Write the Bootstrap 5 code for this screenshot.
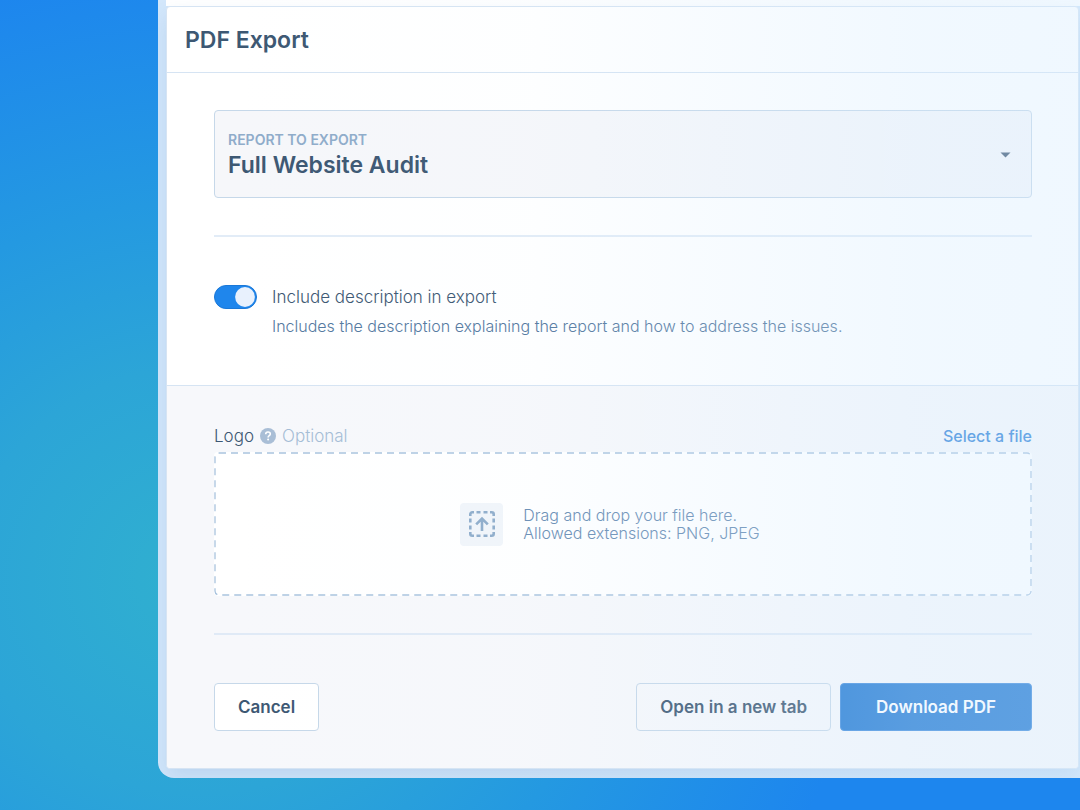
<!DOCTYPE html>
<html lang="en">
<head>
<meta charset="utf-8">
<meta name="viewport" content="width=device-width, initial-scale=1">
<title>PDF Export</title>
<link href="https://cdn.jsdelivr.net/npm/bootstrap@5.3.0/dist/css/bootstrap.min.css" rel="stylesheet">
<style>
  :root { --ink: #3d5873; --soft: #8facca; --line: #d6e4f3; --edge: #c6d8e9; }
  body {
    font-family: Inter, "Liberation Sans", sans-serif;
    color: var(--ink);
    font-size: 17px;
    line-height: 24px;
    font-weight: 300;
    background: radial-gradient(660px 610px at 200px 580px, #30b0cf 0, #2ca5d7 35%, #2499e1 62%, #1d86ee 100%) #1d86ee;
  }
  .stage { padding: 0 0 32px 158px; }
  .frame {
    background: #d3e7fb;
    padding: 0 1px 9px 8px;
    border-bottom-left-radius: 16px;
    position: relative;
    overflow: hidden;
  }
  .prev-strip { height: 6px; background: #fff; margin-right: -1px; }
  .panel {
    background: #fff;
    border: 1px solid var(--line);
    border-radius: 4px;
    box-shadow: 0 10px 20px rgba(60, 110, 180, .14);
  }
  /* pale wash that deepens towards the right side of the window */
  .frame::after {
    content: "";
    position: absolute;
    inset: 0;
    pointer-events: none;
    background: linear-gradient(90deg, rgba(212, 235, 255, 0) 8%, rgba(212, 235, 255, .04) 40%, rgba(212, 235, 255, .32) 82%, rgba(212, 235, 255, .36) 100%);
  }
  .panel-head { height: 66px; padding: 0 18px; border-bottom: 1px solid var(--line); }
  .panel-head h1 { font-size: 23px; line-height: 28px; font-weight: 600; }
  .part { padding: 37px 46px 37px 47px; }
  .part-lower { background: #f7f8fb; border-top: 1px solid var(--line); border-radius: 0 0 4px 4px; padding-top: 38px; }
  .rule { border: 0; border-top: 2px solid var(--line); margin: 37px 0 48px; opacity: .7; }
  .picker label { position: absolute; top: 20px; left: 14px; font-size: 14px; line-height: 20px; font-weight: 600; color: var(--soft); pointer-events: none; }
  .picker select {
    appearance: none;
    display: block;
    height: 88px;
    padding: 22px 48px 0 13px;
    border: 1px solid var(--edge);
    border-radius: 4px;
    background: #f6f7fa;
    color: var(--ink);
    font-size: 23px;
    font-weight: 600;
  }
  .picker svg { position: absolute; top: 42px; right: 21px; pointer-events: none; }
  .form-check.toggle { padding: 0; margin: 0; min-height: 0; gap: 15px; }
  .form-switch .form-check-input.knob {
    width: 43px; height: 24px; margin: 0; float: none; flex: none;
    background-color: #1f86ec; border: 1px solid #1a78d8;
    background-image: url("data:image/svg+xml,%3csvg xmlns='http://www.w3.org/2000/svg' viewBox='-4 -4 8 8'%3e%3ccircle r='3.6' fill='%23e8f1fd'/%3e%3c/svg%3e");
  }
  .note { color: #54799f; font-size: 16px; margin: 5px 0 10px 58px; }
  .logo-row { padding-bottom: 4px; gap: 6px; }
  .opt { color: #a5bdd6; }
  .pick-file { color: #2f83d8; font-weight: 500; font-size: 16px; text-decoration: none; }
  .drop { background: #fff; height: 144px; border-radius: 4px; gap: 20px; padding-right: 26px; font-size: 16px; line-height: 18px; color: #6a8eb5; }
  .drop .outline { position: absolute; inset: 1px; width: calc(100% - 2px); height: calc(100% - 2px); overflow: visible; }
  .drop-icon { width: 43px; height: 43px; border-radius: 4px; background: #f1f5fa; }
  .act { --bs-btn-padding-y: 11px; --bs-btn-padding-x: 23px; --bs-btn-border-radius: 4px; --bs-btn-font-size: 17px; --bs-btn-line-height: 24px; --bs-btn-font-weight: 600;
         height: 48px; --bs-btn-border-color: var(--edge); --bs-btn-color: var(--ink); --bs-btn-bg: #fff; }
  .act-plain { --bs-btn-bg: #f7f8fb; }
  .act-main { --bs-btn-bg: #1f78d2; --bs-btn-color: #fff; --bs-btn-border-color: #3f8bdc; --bs-btn-padding-x: 35px; }
  .acts { gap: 9px; }
</style>
</head>
<body>
<div class="stage min-vh-100">
  <main class="frame">
    <div class="prev-strip"></div>
    <form class="panel">
      <header class="panel-head d-flex align-items-center"><h1 class="m-0">PDF Export</h1></header>

      <section class="part">
        <div class="picker position-relative">
          <select id="report" class="w-100"><option>Full Website Audit</option></select>
          <label for="report">REPORT TO EXPORT</label>
          <svg width="11" height="6" viewBox="0 0 11 6"><path d="M.5.5h10L5.500 5.500z" fill="#3d5773"/></svg>
        </div>
        <hr class="rule">
        <div class="form-check form-switch toggle d-flex align-items-center">
          <input class="form-check-input knob" type="checkbox" role="switch" id="desc" aria-describedby="desc-note" checked>
          <label for="desc">Include description in export</label>
        </div>
        <p class="note" id="desc-note">Includes the description explaining the report and how to address the issues.</p>
      </section>

      <section class="part part-lower">
        <div class="logo-row d-flex align-items-center">
          <label for="logo">Logo</label>
          <svg width="16" height="16" viewBox="0 0 16 16"><circle cx="8" cy="8" r="8" fill="#a9bed6"/><path d="M5.700 6.200C5.700 4.800 6.700 4 8 4s2.300.8 2.300 2c0 1.700-2.200 1.700-2.200 3.400" fill="none" stroke="#fff" stroke-width="1.600"/><circle cx="8.100" cy="11.600" r="1" fill="#fff"/></svg>
          <span class="opt">Optional</span>
          <a class="pick-file ms-auto" href="#logo">Select a file</a>
        </div>
        <div class="drop position-relative d-flex align-items-center justify-content-center">
          <svg class="outline"><rect x="0" y="0" width="100%" height="100%" rx="4" fill="none" stroke="#a9c3de" stroke-width="1.300" stroke-dasharray="7 5"/></svg>
          <input type="file" id="logo" class="visually-hidden" accept="image/png,image/jpeg">
          <div class="drop-icon d-flex align-items-center justify-content-center">
            <svg width="26" height="26" viewBox="0 0 26 26" fill="none" stroke="#8fadcb" stroke-width="2.600">
              <path d="M1.300 5V3.300a2 2 0 0 1 2-2H5M7.500 1.300h4M14.500 1.300h4M21 1.300h1.700a2 2 0 0 1 2 2V5M24.700 7.500v4M24.700 14.500v4M24.700 21v1.700a2 2 0 0 1-2 2H21M18.500 24.700h-4M11.500 24.700h-4M5 24.700H3.300a2 2 0 0 1-2-2V21M1.300 18.500v-4M1.300 11.500v-4"/>
              <path d="M13 20V8M7.200 13.300 13 7.500 18.800 13.300"/>
            </svg>
          </div>
          <div>Drag and drop your file here.<br>Allowed extensions: PNG, JPEG</div>
        </div>
        <hr class="rule">
        <div class="acts d-flex">
          <button type="button" class="btn act">Cancel</button>
          <button type="button" class="btn act act-plain ms-auto">Open in a new tab</button>
          <button type="submit" class="btn act act-main">Download PDF</button>
        </div>
      </section>
    </form>
  </main>
</div>
<script src="https://cdn.jsdelivr.net/npm/bootstrap@5.3.0/dist/js/bootstrap.bundle.min.js"></script>
</body>
</html>
